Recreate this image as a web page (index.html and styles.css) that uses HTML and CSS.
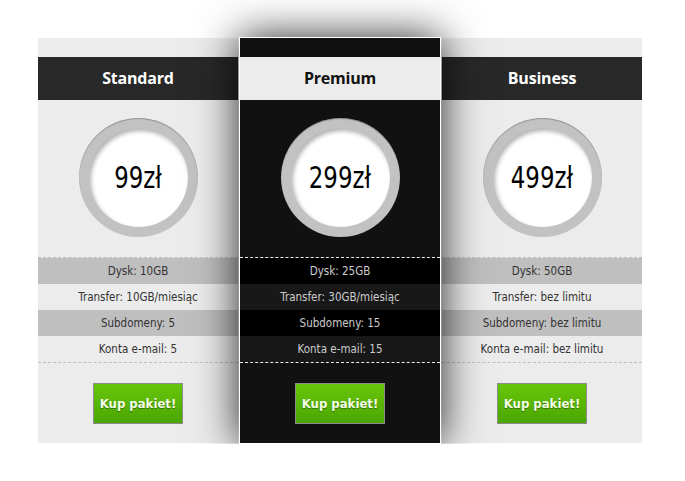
FILE: index.html
```html
<!DOCTYPE html>
<html lang="pl">
<head>
  <meta charset="UTF-8" />
  <meta name="viewport" content="width=device-width, initial-scale=1.0"/>
  <title>Cennik</title>
  <link rel="stylesheet" href="styles.css">
</head>
<body>
  <div class="pricing">
    <div class="plan">
      <h2>Standard</h2>
      <div class="price"><div class="price-inner"><span>99zł</span></div></div>
      <ul class="features">
        <li>Dysk: 10GB</li>
        <li>Transfer: 10GB/miesiąc</li>
        <li>Subdomeny: 5</li>
        <li>Konta e-mail: 5</li>
      </ul>
      <div class="buy"><a href="#" class="btn">Kup pakiet!</a></div>
    </div>
    <div class="plan featured">
      <h2>Premium</h2>
      <div class="price"><div class="price-inner"><span>299zł</span></div></div>
      <ul class="features">
        <li>Dysk: 25GB</li>
        <li>Transfer: 30GB/miesiąc</li>
        <li>Subdomeny: 15</li>
        <li>Konta e-mail: 15</li>
      </ul>
      <div class="buy"><a href="#" class="btn">Kup pakiet!</a></div>
    </div>
    <div class="plan">
      <h2>Business</h2>
      <div class="price"><div class="price-inner"><span>499zł</span></div></div>
      <ul class="features">
        <li>Dysk: 50GB</li>
        <li>Transfer: bez limitu</li>
        <li>Subdomeny: bez limitu</li>
        <li>Konta e-mail: bez limitu</li>
      </ul>
      <div class="buy"><a href="#" class="btn">Kup pakiet!</a></div>
    </div>
  </div>
</body>
</html>
```

FILE: styles.css
```css
body {
  margin: 0;
  background-color: #fff;
  font-family: "DejaVu Sans", sans-serif;
  font-stretch: condensed;
}
.pricing {
  display: flex;
  align-items: flex-start;
  padding: 38px 0 0 38px;
}
.plan {
  width: 200px;
  background-color: #ececec;
  padding-top: 19px;
  text-align: center;
}
.plan h2 {
  margin: 0;
  height: 43px;
  line-height: 43px;
  font-family: "Open Sans", sans-serif;
  font-stretch: normal;
  font-size: 16px;
  font-weight: bold;
  letter-spacing: -0.2px;
  color: #fff;
  background-color: #282828;
}
.price {
  margin: 18px auto 0;
  width: 119px;
  height: 119px;
  box-sizing: border-box;
  border-radius: 50%;
  background-color: #c2c2c2;
  padding: 10px;
  box-shadow: inset 0 1px 1px rgba(0,0,0,0.25);
}
.price-inner {
  width: 99px;
  height: 99px;
  border-radius: 50%;
  background-color: #fff;
  line-height: 99px;
  box-shadow: inset 2px 3px 4px rgba(0,0,0,0.3);
}
.price-inner span {
  display: inline-block;
  font-size: 31px;
  color: #000;
  transform: scaleX(0.82);
}
.features {
  list-style: none;
  margin: 20px 0 0;
  padding: 0;
  border-top: 1px dashed #bdbdbd;
  border-bottom: 1px dashed #bdbdbd;
}
.features li {
  height: 26px;
  line-height: 26px;
  font-size: 11.5px;
  color: #333;
  white-space: nowrap;
}
.features li:nth-child(odd) {
  background-color: #bfbfbf;
}
.buy {
  padding: 20px 0 19px;
}
.btn {
  display: inline-block;
  width: 88px;
  height: 39px;
  line-height: 39px;
  border: 1px solid #8c8c8c;
  background: linear-gradient(#69c60a, #4aa602);
  color: #f4ffe6;
  font-size: 13px;
  font-weight: bold;
  white-space: nowrap;
  text-decoration: none;
  text-shadow: 0 1px 1px rgba(0,0,0,0.4);
}
.featured {
  margin: -1px 1px 0;
  border: 1px solid #fff;
  background-color: #111;
  box-shadow: 0 0 40px rgba(0,0,0,0.85);
  position: relative;
  z-index: 1;
}
.featured h2 {
  color: #111;
  background-color: #ececec;
}
.featured .features {
  border-color: #eee;
}
.featured .features li {
  color: #ccc;
  background-color: #181818;
}
.featured .features li:nth-child(odd) {
  background-color: #000;
}
```
